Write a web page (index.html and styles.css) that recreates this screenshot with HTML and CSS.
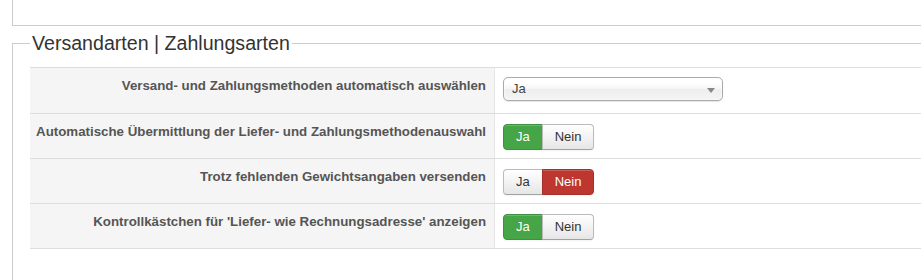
FILE: index.html
```html
<!DOCTYPE html>
<html lang="de">
<head>
  <meta charset="UTF-8" />
  <title>Versandarten | Zahlungsarten</title>
  <link rel="stylesheet" href="styles.css">
</head>
<body>
  <div class="page">
    <div class="top-panel"></div>

    <fieldset class="settings">
      <legend>Versandarten | Zahlungsarten</legend>

      <div class="settings-table">
        <div class="row row-first">
          <div class="label">Versand- und Zahlungsmethoden automatisch auswählen</div>
          <div class="control">
            <div class="chzn-select">
              <span>Ja</span>
              <b class="chzn-arrow"></b>
            </div>
          </div>
        </div>

        <div class="row">
          <div class="label">Automatische Übermittlung der Liefer- und Zahlungsmethodenauswahl</div>
          <div class="control">
            <div class="btn-group">
              <button class="btn btn-yes active">Ja</button>
              <button class="btn">Nein</button>
            </div>
          </div>
        </div>

        <div class="row">
          <div class="label">Trotz fehlenden Gewichtsangaben versenden</div>
          <div class="control">
            <div class="btn-group">
              <button class="btn">Ja</button>
              <button class="btn btn-no active">Nein</button>
            </div>
          </div>
        </div>

        <div class="row">
          <div class="label">Kontrollkästchen für 'Liefer- wie Rechnungsadresse' anzeigen</div>
          <div class="control">
            <div class="btn-group">
              <button class="btn btn-yes active">Ja</button>
              <button class="btn">Nein</button>
            </div>
          </div>
        </div>
      </div>
    </fieldset>
  </div>
</body>
</html>
```

FILE: styles.css
```css
html, body {
  margin: 0;
  padding: 0;
  overflow: hidden;
  background: #ffffff;
}

body {
  font-family: 'Liberation Sans', Arial, sans-serif;
  font-size: 13px;
  line-height: 18px;
  color: #333;
}

.page {
  width: 980px;
}

.top-panel {
  margin-left: 12px;
  height: 25px;
  border-left: 1px solid #cccccc;
  border-bottom: 1px solid #cccccc;
}

.settings {
  margin: 5px 0 0 12px;
  padding: 0 0 60px 17px;
  border: 1px solid #cccccc;
  min-width: 0;
}

.settings legend {
  padding: 0 2px;
  margin: 0;
  font-size: 19.6px;
  line-height: 24px;
  color: #333;
  font-weight: normal;
}

.settings-table {
  margin-top: 12px;
  border-bottom: 1px solid #dddddd;
}

.row {
  display: grid;
  grid-template-columns: 465px 1fr;
  border-top: 1px solid #dddddd;
}

.label {
  background: #f5f5f5;
  border-right: 1px solid #e6e6e6;
  text-align: right;
  font-size: 13.3px;
  font-weight: bold;
  color: #555;
  padding: 9px 8px 0 0;
}

.control {
  padding: 10px 8px 8px 8px;
}

.row-first .control {
  padding-top: 9px;
}

.chzn-select {
  position: relative;
  box-sizing: border-box;
  width: 220px;
  height: 24px;
  margin-bottom: 4px;
  padding-left: 8px;
  line-height: 22px;
  color: #444;
  border: 1px solid #aaaaaa;
  border-radius: 5px;
  background: linear-gradient(#ffffff 20%, #f6f6f6 50%, #eeeeee 52%, #f4f4f4 100%);
  box-shadow: inset 0 0 3px #fff, 0 1px 1px rgba(0, 0, 0, 0.1);
}

.chzn-arrow {
  position: absolute;
  right: 7px;
  top: 10px;
  width: 0;
  height: 0;
  border-left: 4px solid transparent;
  border-right: 4px solid transparent;
  border-top: 5px solid #888;
}

.btn-group {
  display: flex;
}

.btn {
  font-family: inherit;
  font-size: 13px;
  line-height: 18px;
  padding: 3px 12px;
  margin: 0;
  color: #333;
  background: linear-gradient(#ffffff, #e6e6e6);
  border: 1px solid #bbbbbb;
  border-bottom-color: #a2a2a2;
  box-shadow: inset 0 1px 0 rgba(255, 255, 255, 0.2), 0 1px 2px rgba(0, 0, 0, 0.05);
  cursor: pointer;
}

.btn:first-child {
  border-radius: 4px 0 0 4px;
}

.btn:last-child {
  margin-left: -1px;
  border-radius: 0 4px 4px 0;
}

.btn-yes.active {
  background: #46a546;
  border-color: #3e8f3e;
  color: #fff;
}

.btn-no.active {
  background: #bd362f;
  border-color: #a5302a;
  color: #fff;
}
```
